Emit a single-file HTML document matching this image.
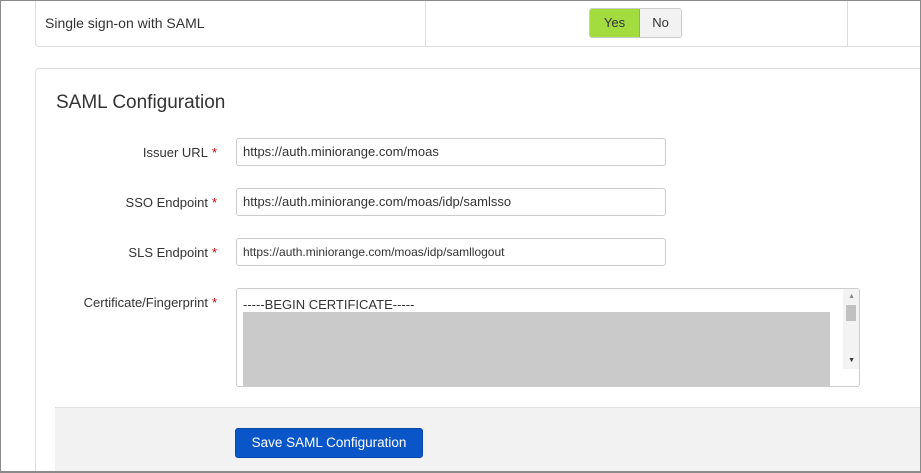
<!DOCTYPE html>
<html style="overflow:hidden;height:473px"><head><style>
body{margin:0;width:921px;height:473px;overflow:hidden;background:#fff;font-family:"Liberation Sans",sans-serif;position:relative}
.frame{position:absolute;left:0;top:0;width:919px;height:470px;border:1px solid #8a8a8a;border-bottom:2px solid #8a8a8a}
.p1{position:absolute;left:35px;top:-4px;width:886px;height:51px;background:#fff;border:1px solid #ddd;border-right:none;border-radius:4px 0 0 4px;box-sizing:border-box}
.p1 .c1{position:absolute;left:0;top:0;width:389px;height:50px;border-right:1px solid #ddd}
.p1 .c2{position:absolute;left:811px;top:0;height:50px;border-left:1px solid #ddd}
.lbl{position:absolute;left:9px;top:18px;font-size:14px;color:#333}
.tog{position:absolute;left:589px;top:8px;height:28px;display:flex;border:1px solid #ccc;border-radius:3px;overflow:hidden;font-size:13px}
.tog .y{background:#a3dc3f;width:49px;text-align:center;line-height:28px;color:#333;border-right:1px solid #8cbf30}
.tog .n{background:#f2f2f2;width:41px;text-align:center;line-height:28px;color:#333}
.p2{position:absolute;left:35px;top:68px;width:886px;height:405px;background:#fff;border:1px solid #ddd;border-right:none;border-bottom:none;border-radius:4px 0 0 0;box-sizing:border-box}
h2{position:absolute;left:56px;top:92px;margin:0;font-weight:normal;font-size:19px;color:#333}
.row{position:absolute;font-size:13px;color:#333}
.row .l{position:absolute;right:0;white-space:nowrap}
.req{color:#c00;margin-left:4px}
.inp{position:absolute;left:236px;width:430px;height:28px;border:1px solid #ccc;border-radius:3px;box-sizing:border-box;font-size:13px;color:#333;padding:6px;line-height:14px;background:#fff}
.ta{position:absolute;left:236px;top:288px;width:624px;height:99px;border:1px solid #ccc;border-radius:3px;box-sizing:border-box;background:#fff;overflow:hidden}
.footer{position:absolute;left:55px;top:407px;width:866px;height:64px;background:#f2f2f2;border-top:1px solid #e0e0e0}
.btn{position:absolute;left:235px;top:428px;width:188px;height:30px;background:#0a56c9;border:1px solid #0846a8;border-radius:3px;box-sizing:border-box;color:#fff;font-size:13.5px;text-align:center;line-height:28px}
</style></head><body>
<div class="p1"><div class="c1"></div><div class="c2"></div><div class="lbl">Single sign-on with SAML</div></div>
<div class="tog"><div class="y">Yes</div><div class="n">No</div></div>
<div class="p2"></div>
<h2>SAML Configuration</h2>
<div class="row" style="left:0;top:145px;width:217px"><span class="l">Issuer URL<span class="req">*</span></span></div>
<div class="inp" style="top:138px">https://auth.miniorange.com/moas</div>
<div class="row" style="left:0;top:195px;width:217px"><span class="l">SSO Endpoint<span class="req">*</span></span></div>
<div class="inp" style="top:188px">https://auth.miniorange.com/moas/idp/samlsso</div>
<div class="row" style="left:0;top:245px;width:217px"><span class="l">SLS Endpoint<span class="req">*</span></span></div>
<div class="inp" style="top:238px;font-size:12px">https://auth.miniorange.com/moas/idp/samllogout</div>
<div class="row" style="left:0;top:295px;width:217px"><span class="l">Certificate/Fingerprint<span class="req">*</span></span></div>
<div class="ta">
 <div style="position:absolute;left:6px;top:8px;font-size:13px;color:#333">-----BEGIN CERTIFICATE-----</div>
 <div style="position:absolute;left:6px;top:23px;width:587px;height:76px;background:#cacaca"></div>
 <div style="position:absolute;right:0;top:0;width:16px;height:80px;background:#f3f3f3"></div>
 <div style="position:absolute;right:3px;top:16px;width:10px;height:16px;background:#c1c1c1"></div>
 <div style="position:absolute;right:4px;top:4px;font-size:7px;color:#888">▲</div>
 <div style="position:absolute;right:4px;top:68px;font-size:7px;color:#333">▼</div>
</div>
<div class="footer"></div>
<div class="btn">Save SAML Configuration</div>
<div class="frame"></div>
</body></html>
